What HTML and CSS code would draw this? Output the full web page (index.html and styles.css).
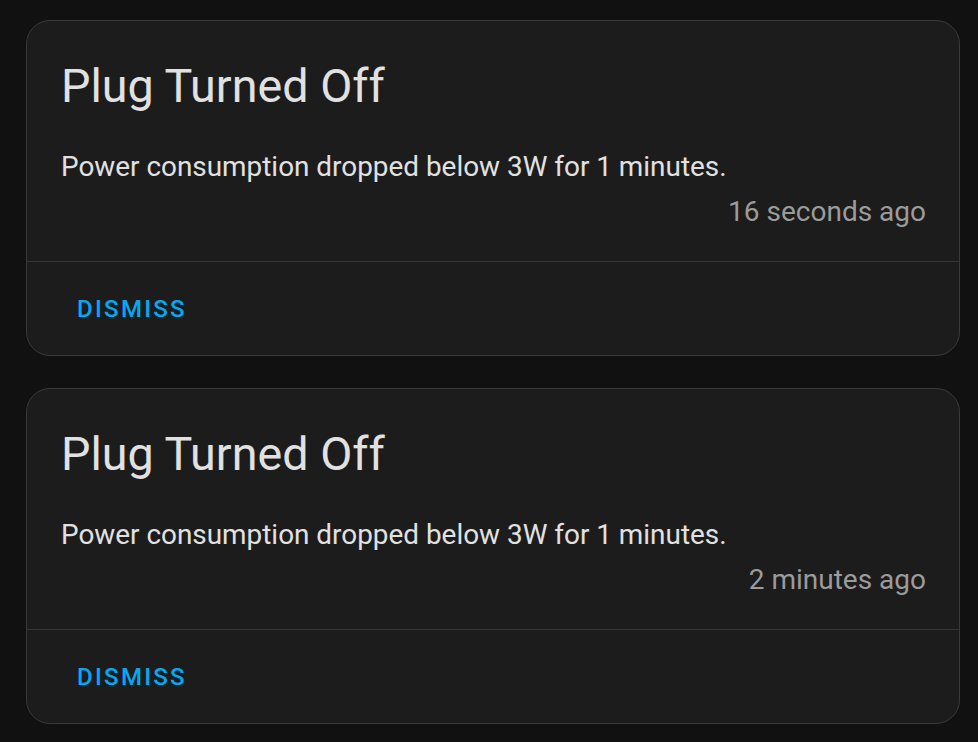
FILE: index.html
```html
<!DOCTYPE html>
<html>
<head>
<meta charset="utf-8">
<link rel="stylesheet" href="styles.css">
</head>
<body>
<div class="list">
  <div class="card">
    <div class="content">
      <div class="title">Plug Turned Off</div>
      <div class="message">Power consumption dropped below 3W for 1 minutes.</div>
      <div class="time">16 seconds ago</div>
    </div>
    <div class="actions"><button class="btn">Dismiss</button></div>
  </div>
  <div class="card">
    <div class="content">
      <div class="title">Plug Turned Off</div>
      <div class="message">Power consumption dropped below 3W for 1 minutes.</div>
      <div class="time">2 minutes ago</div>
    </div>
    <div class="actions"><button class="btn">Dismiss</button></div>
  </div>
</div>
</body>
</html>
```
FILE: styles.css
```css
html, body {
  margin: 0;
  padding: 0;
  background: #111111;
  font-family: Roboto, "Noto Sans", sans-serif;
}
.list {
  padding: 20px 18px 0 26px;
  display: flex;
  flex-direction: column;
  gap: 32px;
}
.card {
  background: #1c1c1c;
  border: 1px solid #3a3a3a;
  border-radius: 24px;
}
.content {
  padding: 35px 33px 31px 34px;
}
.title {
  font-size: 46.7px;
  line-height: 60px;
  color: #e1e1e1;
  font-weight: 400;
}
.message {
  margin-top: 33px;
  font-size: 27.9px;
  line-height: 36px;
  color: #e1e1e1;
}
.time {
  margin-top: 9px;
  font-size: 28px;
  line-height: 36px;
  color: #9b9b9b;
  text-align: right;
}
.actions {
  border-top: 1px solid #353535;
  padding: 29px 50px 28px 50px;
}
.btn {
  background: none;
  border: none;
  padding: 0;
  margin: 0;
  font-family: Roboto, sans-serif;
  font-size: 24px;
  line-height: 36px;
  font-weight: 500;
  letter-spacing: 2.3px;
  text-transform: uppercase;
  color: #03a9f4;
  display: block;
}
```
